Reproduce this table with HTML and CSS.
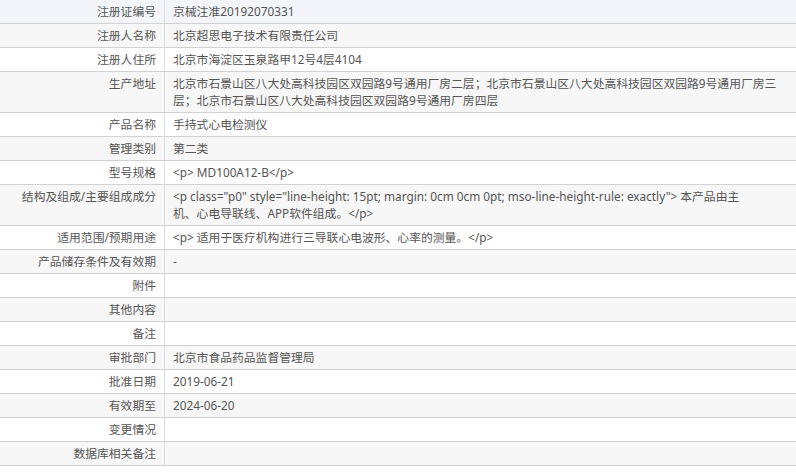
FILE: index.html
```html
<!DOCTYPE html>
<html lang="zh-CN">
<head>
<meta charset="utf-8">
<title>注册证信息</title>
<link rel="stylesheet" href="styles.css">
</head>
<body>
<div class="info-table">
  <div class="row row-hover"><div class="label">注册证编号</div><div class="value">京械注准20192070331</div></div>
  <div class="row row-alt"><div class="label">注册人名称</div><div class="value">北京超思电子技术有限责任公司</div></div>
  <div class="row"><div class="label">注册人住所</div><div class="value">北京市海淀区玉泉路甲12号4层4104</div></div>
  <div class="row row-alt"><div class="label">生产地址</div><div class="value">北京市石景山区八大处高科技园区双园路9号通用厂房二层；北京市石景山区八大处高科技园区双园路9号通用厂房三层；北京市石景山区八大处高科技园区双园路9号通用厂房四层</div></div>
  <div class="row"><div class="label">产品名称</div><div class="value">手持式心电检测仪</div></div>
  <div class="row row-alt"><div class="label">管理类别</div><div class="value">第二类</div></div>
  <div class="row"><div class="label">型号规格</div><div class="value">&lt;p&gt; MD100A12-B&lt;/p&gt;</div></div>
  <div class="row row-alt"><div class="label">结构及组成/主要组成成分</div><div class="value">&lt;p class="p0" style="line-height: 15pt; margin: 0cm 0cm 0pt; mso-line-height-rule: exactly"&gt; 本产品由主<br>机、心电导联线、APP软件组成。&lt;/p&gt;</div></div>
  <div class="row"><div class="label">适用范围/预期用途</div><div class="value">&lt;p&gt; 适用于医疗机构进行三导联心电波形、心率的测量。&lt;/p&gt;</div></div>
  <div class="row row-alt"><div class="label">产品储存条件及有效期</div><div class="value">-</div></div>
  <div class="row"><div class="label">附件</div><div class="value"></div></div>
  <div class="row row-alt"><div class="label">其他内容</div><div class="value"></div></div>
  <div class="row"><div class="label">备注</div><div class="value"></div></div>
  <div class="row row-alt"><div class="label">审批部门</div><div class="value">北京市食品药品监督管理局</div></div>
  <div class="row"><div class="label">批准日期</div><div class="value">2019-06-21</div></div>
  <div class="row row-alt"><div class="label">有效期至</div><div class="value">2024-06-20</div></div>
  <div class="row"><div class="label">变更情况</div><div class="value"></div></div>
  <div class="row row-alt"><div class="label">数据库相关备注</div><div class="value"></div></div>
</div>
</body>
</html>
```

FILE: styles.css
```css
html, body {
  margin: 0;
  padding: 0;
  background: #ffffff;
}

body {
  font-family: "Noto Sans", "Noto Sans CJK SC", sans-serif;
  font-size: 11.8px;
  color: #555555;
}

.info-table {
  display: flex;
  flex-direction: column;
  width: 796px;
}

.row {
  display: grid;
  grid-template-columns: 165px 1fr;
  border-bottom: 1px solid #d2d2d2;
  background: #ffffff;
}

.row-alt {
  background: #f7f7f7;
}

.row-hover {
  background: #f3f5fa;
}

.label {
  border-right: 1px solid #dcdcdc;
  text-align: right;
  padding: 3px 8px;
  line-height: 17px;
  min-height: 17px;
}

.value {
  padding: 3px 14px 3px 8px;
  line-height: 17px;
  min-height: 17px;
}
```
